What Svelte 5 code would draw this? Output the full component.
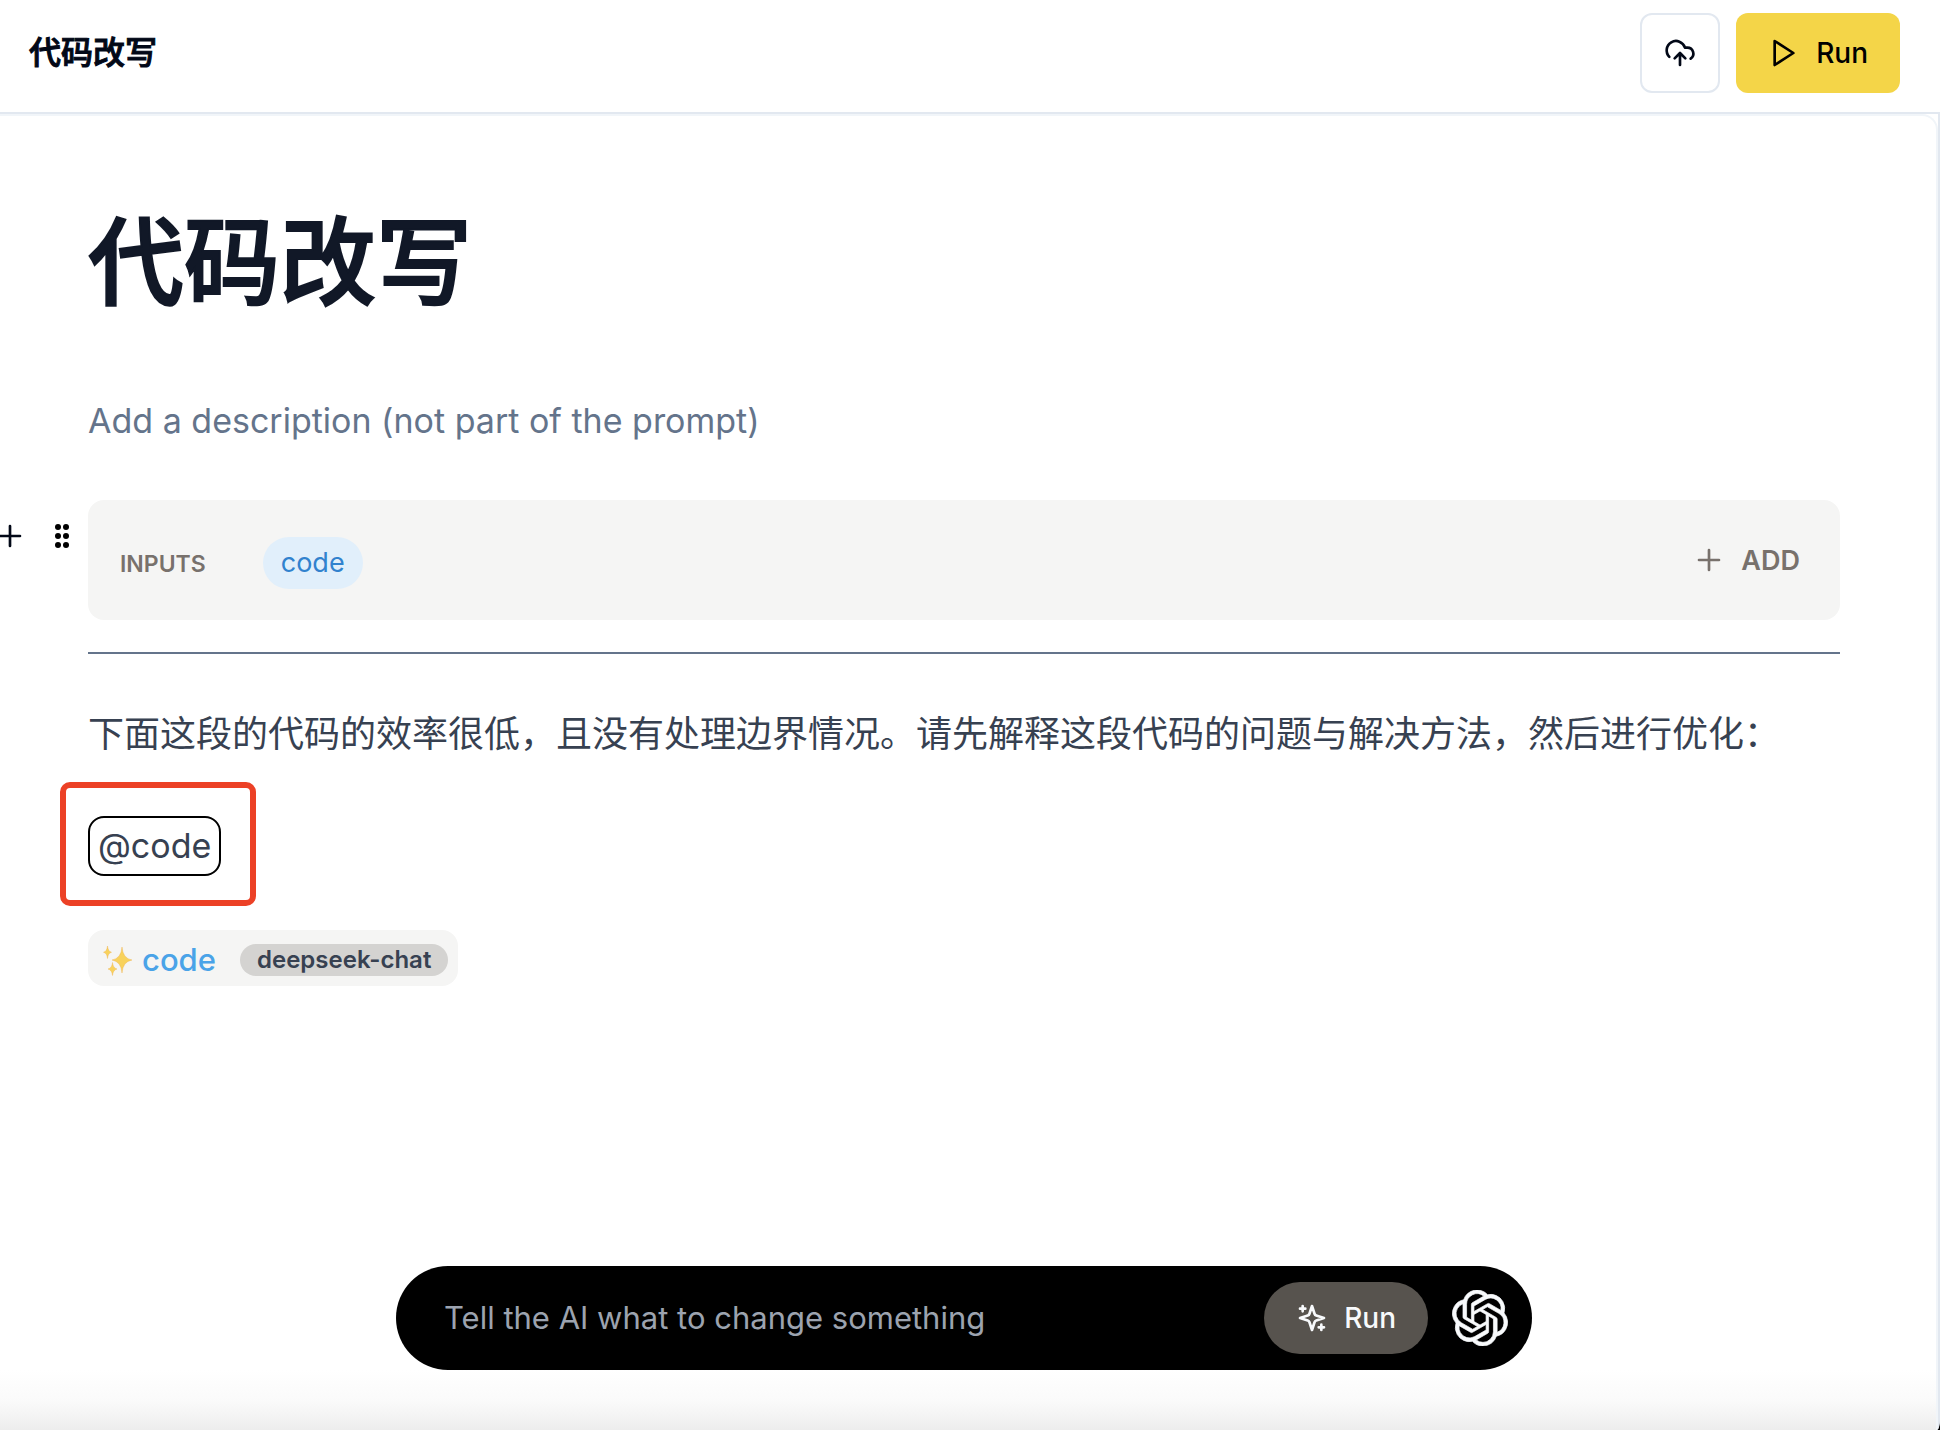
<script lang="ts">
  const title = '代码改写';
  const inputs = ['code'];
  let instruction = $state('');
</script>

<div class="app">
  <header class="topbar">
    <span class="crumb">{title}</span>
    <div class="actions">
      <button class="btn publish" aria-label="Publish">
        <svg viewBox="0 0 24 24" width="32" height="32" class="line">
          <path d="M4 14.899A7 7 0 1 1 15.710 8h1.790a4.500 4.500 0 0 1 2.500 8.242" />
          <path d="M12 12v9M16 16l-4-4-4 4" />
        </svg>
      </button>
      <button class="btn run">
        <svg viewBox="0 0 24 24" width="32" height="32" class="line">
          <path d="M5 3l14 9-14 9z" />
        </svg>
        Run
      </button>
    </div>
  </header>

  <div class="frame">
    <main class="panel">
      <article class="doc">
        <h1>{title}</h1>
        <p class="description">Add a description (not part of the prompt)</p>

        <div class="block">
          <div class="handles">
            <button class="handle" aria-label="Add block">
              <svg viewBox="0 0 24 24" width="32" height="32" class="line">
                <path d="M12 4.500v15M4.500 12h15" />
              </svg>
            </button>
            <button class="handle" aria-label="Drag block">
              <svg viewBox="0 0 16 28" width="16" height="28">
                <circle cx="4" cy="5" r="3" /><circle cx="12" cy="5" r="3" />
                <circle cx="4" cy="14" r="3" /><circle cx="12" cy="14" r="3" />
                <circle cx="4" cy="23" r="3" /><circle cx="12" cy="23" r="3" />
              </svg>
            </button>
          </div>
          <section class="inputs">
            <div class="fields">
              <h2>INPUTS</h2>
              {#each inputs as name}
                <span class="chip">{name}</span>
              {/each}
            </div>
            <button class="add">
              <svg viewBox="0 0 24 24" width="32" height="32" class="line">
                <path d="M12 4.500v15M4.500 12h15" />
              </svg>
              ADD
            </button>
          </section>
        </div>

        <hr />

        <p class="prompt">下面这段的代码的效率很低，且没有处理边界情况。请先解释这段代码的问题与解决方法，然后进行优化：</p>

        <div class="highlight"><span class="mention">@code</span></div>

        <div class="output">
          <svg class="sparkles" viewBox="0 0 30 32" width="30" height="32">
            <path d="M20 3Q20.800 14.500 30 16Q20.800 17.500 20 29Q19.200 17.500 10 16Q19.200 14.500 20 3z" />
            <path d="M5.500 2Q6 7.500 9.500 8.300Q6 9 5.500 14.500Q5 9 1.500 8.300Q5 7.500 5.500 2z" />
            <path d="M10.500 18.500Q11 24 15 25Q11 26 10.500 31.500Q10 26 6 25Q10 24 10.500 18.500z" />
          </svg>
          <span class="name">code</span>
          <span class="model">deepseek-chat</span>
        </div>
      </article>

      <div class="dock">
        <form class="assistant" onsubmit={(e) => e.preventDefault()}>
          <input
            type="text"
            aria-label="Instruction"
            placeholder="Tell the AI what to change something"
            bind:value={instruction}
          />
          <button class="ask">
            <svg viewBox="0 0 24 24" width="32" height="32" class="line">
              <path d="m12 3-1.900 5.800a2 2 0 0 1-1.300 1.300L3 12l5.800 1.900a2 2 0 0 1 1.300 1.300L12 21l1.900-5.800a2 2 0 0 1 1.300-1.300L21 12l-5.800-1.900a2 2 0 0 1-1.300-1.300z" />
              <path d="M5 3v4M3 5h4M19 17v4M17 19h4" />
            </svg>
            Run
          </button>
          <button class="provider" aria-label="Choose model" type="button">
            <svg viewBox="0 0 24 24" width="56" height="56" class="knot">
              <path d="M22.2819 9.8211a5.9847 5.9847 0 0 0-.5157-4.9108 6.0462 6.0462 0 0 0-6.5098-2.9A6.0651 6.0651 0 0 0 4.9807 4.1818a5.9847 5.9847 0 0 0-3.9977 2.9 6.0462 6.0462 0 0 0 .7427 7.0966 5.98 5.98 0 0 0 .511 4.9107 6.051 6.051 0 0 0 6.5146 2.9001A5.9847 5.9847 0 0 0 13.2599 24a6.0557 6.0557 0 0 0 5.7718-4.2058 5.9894 5.9894 0 0 0 3.9977-2.9001 6.0557 6.0557 0 0 0-.7475-7.0729zm-9.022 12.6081a4.4755 4.4755 0 0 1-2.8764-1.0408l.1419-.0804 4.7783-2.7582a.7948.7948 0 0 0 .3927-.6813v-6.7369l2.02 1.1686a.071.071 0 0 1 .038.0615v5.5826a4.504 4.504 0 0 1-4.4945 4.4944zm-9.6607-4.1254a4.4708 4.4708 0 0 1-.5346-3.0137l.142.0852 4.783 2.7582a.7712.7712 0 0 0 .7806 0l5.8428-3.3685v2.3324a.0804.0804 0 0 1-.0332.0615L9.74 19.9502a4.4992 4.4992 0 0 1-6.1408-1.6464zM2.3408 7.8956a4.485 4.485 0 0 1 2.3655-1.9728V11.6a.7664.7664 0 0 0 .3879.6765l5.8144 3.3543-2.0201 1.1685a.0757.0757 0 0 1-.071 0l-4.8303-2.7865A4.504 4.504 0 0 1 2.3408 7.872zm16.5963 3.8558L13.1038 8.364 15.1192 7.2a.0757.0757 0 0 1 .071 0l4.8303 2.7913a4.4944 4.4944 0 0 1-.6765 8.1042v-5.6772a.79.79 0 0 0-.407-.667zm2.0107-3.0231l-.142-.0852-4.7735-2.7818a.7759.7759 0 0 0-.7854 0L9.409 9.2297V6.8974a.0662.0662 0 0 1 .0284-.0615l4.8303-2.7866a4.4992 4.4992 0 0 1 6.6802 4.66zM8.3065 12.863l-2.02-1.1638a.0804.0804 0 0 1-.038-.0567V6.0742a4.4992 4.4992 0 0 1 7.3757-3.4537l-.142.0805L8.704 5.459a.7948.7948 0 0 0-.3927.6813zm1.0976-2.3654l2.602-1.4998 2.6069 1.4998v2.9994l-2.5974 1.4997-2.6067-1.4997Z" />
            </svg>
          </button>
        </form>
      </div>
    </main>
  </div>
</div>

<style>
  :global(body) {
    background: #000;
  }

  .app,
  .app * {
    box-sizing: border-box;
  }

  .app {
    display: flex;
    flex-direction: column;
    min-height: 100vh;
    background: #fff;
    border-bottom-right-radius: 3px 12px;
    overflow: hidden;
    color: #020817;
    font-family: Inter, 'Noto Sans CJK SC', sans-serif;
  }

  button {
    display: flex;
    align-items: center;
    padding: 0;
    border: 0;
    background: none;
    color: inherit;
    font: inherit;
    cursor: pointer;
  }

  svg {
    display: block;
    flex: none;
  }

  .line {
    fill: none;
    stroke: currentColor;
    stroke-width: 2;
    stroke-linecap: round;
    stroke-linejoin: round;
  }

  .topbar {
    display: flex;
    align-items: center;
    justify-content: space-between;
    padding: 13px 40px 19px 29px;
    border-bottom: 2px solid #e2e8f0;
  }

  .crumb {
    font-size: 32px;
    line-height: 40px;
    font-weight: 500;
    -webkit-text-stroke: 1px currentColor;
  }

  .actions {
    display: flex;
    gap: 16px;
  }

  .btn {
    justify-content: center;
    height: 80px;
    border-radius: 12px;
    font-size: 28px;
    font-weight: 500;
  }

  .publish {
    width: 80px;
    border: 2px solid #e2e8f0;
  }

  .run {
    gap: 16px;
    padding: 0 32px;
    background: #f4d548;
    color: #000;
  }

  .frame {
    display: flex;
    flex: 1;
    border-right: 2px solid #e2e8f0;
  }

  .panel {
    display: flex;
    flex-direction: column;
    flex: 1;
    min-width: 0;
    padding: 0 96px 0 88px;
    border-top: 2px solid #f1f5f9;
    border-right: 2px solid #f1f5f9;
    border-top-right-radius: 16px;
    background: linear-gradient(to top, #ededed, #fafafa 28px, #fff 60px);
  }

  .doc {
    display: flex;
    flex-direction: column;
    padding-top: 90px;
  }

  h1,
  h2,
  p,
  hr {
    margin: 0;
  }

  h1 {
    color: #111827;
    font-size: 96px;
    line-height: 112px;
    font-weight: 500;
    -webkit-text-stroke: 2px currentColor;
  }

  .description {
    margin-top: 79px;
    color: #64748b;
    font-size: 34px;
    line-height: 48px;
  }

  .block {
    position: relative;
    margin-top: 55px;
  }

  .handles {
    position: absolute;
    top: 20px;
    right: calc(100% + 18px);
    display: flex;
    align-items: center;
    gap: 28px;
  }

  .inputs {
    display: flex;
    align-items: center;
    justify-content: space-between;
    min-height: 120px;
    padding: 0 40px 0 32px;
    border-radius: 16px;
    background: #f5f5f4;
    color: #78716c;
  }

  .fields {
    display: flex;
    align-items: baseline;
    gap: 57px;
    padding-top: 6px;
  }

  h2 {
    font-size: 23px;
    line-height: 32px;
    font-weight: 600;
  }

  .chip {
    padding: 6px 18px;
    border-radius: 28px;
    background: #e1effb;
    color: #3182ce;
    font-size: 27px;
    line-height: 40px;
  }

  .add {
    gap: 16px;
    font-size: 27px;
    font-weight: 600;
  }

  hr {
    margin-top: 32px;
    border: 0;
    border-top: 2px solid #64748b;
  }

  .prompt {
    margin-top: 56px;
    color: #374151;
    font-size: 36px;
    line-height: 48px;
  }

  .highlight {
    align-self: flex-start;
    margin: 24px 0 24px -28px;
    padding: 28px 29px 24px 22px;
    border: 6px solid #ec4126;
    border-radius: 10px;
  }

  .mention {
    display: block;
    padding: 4px 8px;
    border: 2px solid #000;
    border-radius: 16px;
    color: #374151;
    font-size: 34px;
    line-height: 48px;
  }

  .output {
    display: flex;
    align-items: center;
    align-self: flex-start;
    height: 56px;
    padding: 3px 10px 0 14px;
    border-radius: 16px;
    background: #f5f5f4;
  }

  .sparkles {
    fill: #f8d25c;
    stroke: #efb04c;
    stroke-width: 0.4;
  }

  .name {
    margin: 0 24px 0 10px;
    color: #4aa3e8;
    font-size: 31px;
    line-height: 40px;
    font-weight: 500;
  }

  .model {
    padding: 0 17px;
    border-radius: 16px;
    background: #d4d3d1;
    color: #374151;
    font-size: 24px;
    line-height: 32px;
    font-weight: 600;
  }

  .dock {
    display: flex;
    justify-content: center;
    margin-top: auto;
    padding: 40px 0 60px;
  }

  .assistant {
    display: flex;
    align-items: center;
    width: 100%;
    max-width: 1136px;
    height: 104px;
    padding: 0 24px 0 48px;
    border-radius: 52px;
    background: #000;
    color: #f8fafc;
  }

  input {
    flex: 1;
    min-width: 0;
    padding: 0;
    border: 0;
    outline: 0;
    background: none;
    color: inherit;
    font: inherit;
    font-size: 31px;
    line-height: 40px;
  }

  input::placeholder {
    color: #9ca3af;
    opacity: 1;
  }

  .ask {
    gap: 16px;
    height: 72px;
    padding: 0 32px;
    border-radius: 36px;
    background: #57534e;
    font-size: 28px;
    font-weight: 500;
  }

  .provider {
    margin-left: 24px;
  }

  .knot {
    fill: currentColor;
    stroke: currentColor;
    stroke-width: 0.3;
  }
</style>
